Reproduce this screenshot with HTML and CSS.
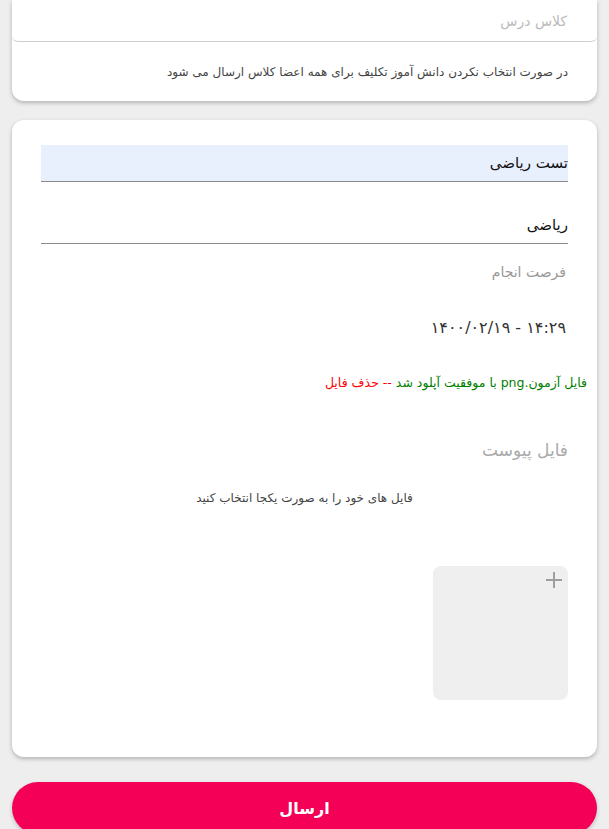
FILE: index.html
```html
<!DOCTYPE html>
<html lang="fa" dir="rtl">
<head>
<meta charset="utf-8">
<title>تکلیف</title>
<link rel="stylesheet" href="styles.css">
</head>
<body>
<div class="page">
  <section class="card card-top">
    <div class="select-field">
      <span class="placeholder">کلاس درس</span>
    </div>
    <p class="hint">در صورت انتخاب نکردن دانش آموز تکلیف برای همه اعضا کلاس ارسال می شود</p>
  </section>

  <section class="card card-main">
    <div class="form">
      <div class="field field-filled">تست ریاضی</div>
      <div class="field">ریاضی</div>
      <div class="label">فرصت انجام</div>
      <div class="date">۱۴:۲۹ - ۱۴۰۰/۰۲/۱۹</div>
    </div>
    <p class="upload-msg"><span class="ok">فایل آزمون.png با موفقیت آپلود شد</span> <span class="del">-- حذف فایل</span></p>
    <div class="form">
      <div class="attach-title">فایل پیوست</div>
      <p class="attach-hint">فایل های خود را به صورت یکجا انتخاب کنید</p>
      <div class="drop-row">
        <div class="drop-box">
          <svg class="plus" width="18" height="18" viewBox="0 0 18 18"><path d="M9 1v16M1 9h16" stroke="#9e9e9e" stroke-width="2"/></svg>
        </div>
      </div>
    </div>
  </section>

  <button class="submit">ارسال</button>
</div>
</body>
</html>
```
FILE: styles.css
```css
* { box-sizing: border-box; }
html, body { margin: 0; padding: 0; }
body {
  background: #eeeeee;
  font-family: Tahoma, "DejaVu Sans", sans-serif;
  color: #333;
}
.page {
  padding: 0 12px;
  display: flex;
  flex-direction: column;
}
.card {
  background: #fff;
  border-radius: 12px;
  box-shadow: 0 2px 4px rgba(0,0,0,0.25);
}
.card-top {
  border-radius: 0 0 12px 12px;
  height: 101px;
}
.select-field {
  height: 42px;
  border-bottom: 1px solid #cfcfcf;
  border-radius: 0 0 6px 6px;
  display: flex;
  align-items: center;
  padding-right: 30px;
}
.placeholder {
  font-size: 14px;
  color: #bbb;
}
.hint {
  margin: 23px 29px 0 0;
  font-size: 12px;
  color: #444;
}
.card-main {
  margin-top: 19px;
  padding: 25px 10px 56px;
  height: 637px;
}
.form {
  padding: 0 19px;
  display: flex;
  flex-direction: column;
}
.field {
  height: 37px;
  border-bottom: 1px solid #8a8a8a;
  font-size: 15px;
  color: #111;
  display: flex;
  align-items: center;
  margin-bottom: 25px;
}
.field-filled {
  background: #e8f0fe;
}
.label {
  font-size: 14px;
  color: #999;
  padding-right: 2px;
  margin-top: -5px;
}
.date {
  font-size: 16px;
  color: #333;
  margin-top: 38px;
  padding-right: 2px;
}
.upload-msg {
  margin: 38px 0 0;
  font-size: 12.5px;
}
.ok { color: #008000; }
.del { color: #ff0000; }
.attach-title {
  margin-top: 50px;
  font-size: 17px;
  color: #aaa;
}
.attach-hint {
  margin: 31px 0 0;
  text-align: center;
  font-size: 12px;
  color: #444;
}
.drop-row {
  display: flex;
  margin-top: 61px;
}
.drop-box {
  width: 135px;
  height: 134px;
  background: #efefef;
  border-radius: 8px;
  position: relative;
}
.plus {
  position: absolute;
  top: 5px;
  right: 5px;
}
.submit {
  margin-top: 25px;
  height: 52px;
  border: 0;
  border-radius: 30px;
  background: #f50057;
  color: #fff;
  font-family: Tahoma, "DejaVu Sans", sans-serif;
  font-size: 16px;
  font-weight: bold;
  box-shadow: 0 2px 4px rgba(0,0,0,0.2);
}
```
